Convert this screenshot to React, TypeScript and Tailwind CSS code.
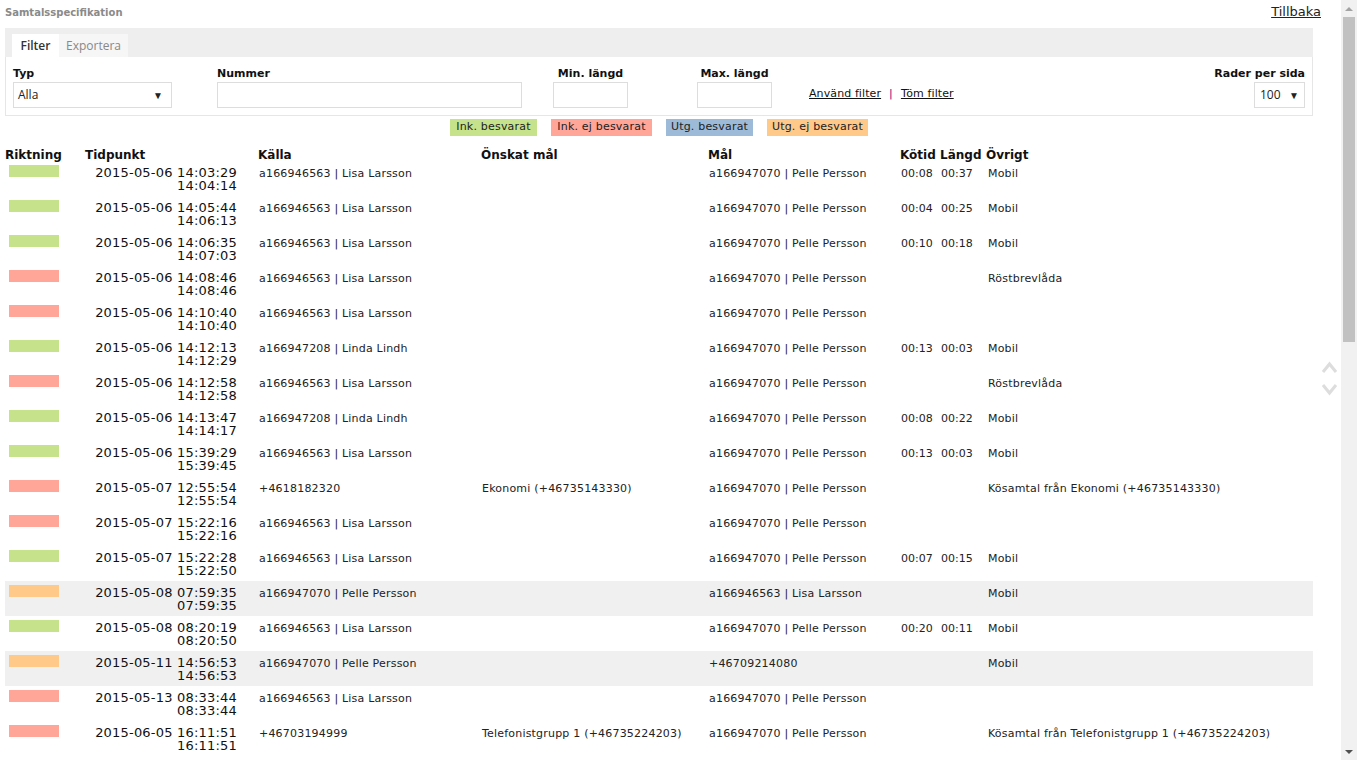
import React from "react";

type Dir = "in" | "miss" | "out" | "outMiss";

type Call = {
  dir: Dir;
  start: string;
  end: string;
  source: string;
  wanted?: string;
  target: string;
  queue?: string;
  length?: string;
  other?: string;
};

const LISA = "a166946563 | Lisa Larsson";
const PELLE = "a166947070 | Pelle Persson";
const LINDA = "a166947208 | Linda Lindh";

const calls: Call[] = [
  { dir: "in", start: "2015-05-06 14:03:29", end: "14:04:14", source: LISA, target: PELLE, queue: "00:08", length: "00:37", other: "Mobil" },
  { dir: "in", start: "2015-05-06 14:05:44", end: "14:06:13", source: LISA, target: PELLE, queue: "00:04", length: "00:25", other: "Mobil" },
  { dir: "in", start: "2015-05-06 14:06:35", end: "14:07:03", source: LISA, target: PELLE, queue: "00:10", length: "00:18", other: "Mobil" },
  { dir: "miss", start: "2015-05-06 14:08:46", end: "14:08:46", source: LISA, target: PELLE, other: "Röstbrevlåda" },
  { dir: "miss", start: "2015-05-06 14:10:40", end: "14:10:40", source: LISA, target: PELLE },
  { dir: "in", start: "2015-05-06 14:12:13", end: "14:12:29", source: LINDA, target: PELLE, queue: "00:13", length: "00:03", other: "Mobil" },
  { dir: "miss", start: "2015-05-06 14:12:58", end: "14:12:58", source: LISA, target: PELLE, other: "Röstbrevlåda" },
  { dir: "in", start: "2015-05-06 14:13:47", end: "14:14:17", source: LINDA, target: PELLE, queue: "00:08", length: "00:22", other: "Mobil" },
  { dir: "in", start: "2015-05-06 15:39:29", end: "15:39:45", source: LISA, target: PELLE, queue: "00:13", length: "00:03", other: "Mobil" },
  { dir: "miss", start: "2015-05-07 12:55:54", end: "12:55:54", source: "+4618182320", wanted: "Ekonomi (+46735143330)", target: PELLE, other: "Kösamtal från Ekonomi (+46735143330)" },
  { dir: "miss", start: "2015-05-07 15:22:16", end: "15:22:16", source: LISA, target: PELLE },
  { dir: "in", start: "2015-05-07 15:22:28", end: "15:22:50", source: LISA, target: PELLE, queue: "00:07", length: "00:15", other: "Mobil" },
  { dir: "outMiss", start: "2015-05-08 07:59:35", end: "07:59:35", source: PELLE, target: LISA, other: "Mobil" },
  { dir: "in", start: "2015-05-08 08:20:19", end: "08:20:50", source: LISA, target: PELLE, queue: "00:20", length: "00:11", other: "Mobil" },
  { dir: "outMiss", start: "2015-05-11 14:56:53", end: "14:56:53", source: PELLE, target: "+46709214080", other: "Mobil" },
  { dir: "miss", start: "2015-05-13 08:33:44", end: "08:33:44", source: LISA, target: PELLE },
  { dir: "miss", start: "2015-06-05 16:11:51", end: "16:11:51", source: "+46703194999", wanted: "Telefonistgrupp 1 (+46735224203)", target: PELLE, other: "Kösamtal från Telefonistgrupp 1 (+46735224203)" },
];

const barColor: Record<Dir, string> = {
  in: "bg-[#c6e28b]",
  miss: "bg-[#ffa699]",
  out: "bg-[#9dbbd9]",
  outMiss: "bg-[#ffc98a]",
};

const cols =
  "grid grid-cols-[80px_173px_223px_227px_192px_40px_46px_1fr]";

const font = "font-['DejaVu_Sans',Verdana,sans-serif]";

const Field: React.FC<{ className?: string; children?: React.ReactNode }> = ({ className, children }) => (
  <div
    className={`h-[26px] border border-[#dddddd] bg-white flex items-center font-['Open_Sans',sans-serif] text-[12px] text-[#222] ${className ?? ""}`}
  >
    {children}
  </div>
);

const Scrollbar: React.FC = () => (
  <div className="w-[16px] shrink-0 bg-[#f1f1f1] flex flex-col items-center">
    <div className="h-[17px] flex items-center justify-center">
      <div className="w-0 h-0 border-l-[4px] border-r-[4px] border-b-[4px] border-l-transparent border-r-transparent border-b-[#a3a3a3]" />
    </div>
    <div className="w-[12px] h-[325px] bg-[#c1c1c1]" />
    <div className="flex-1" />
    <div className="h-[17px] flex items-center justify-center">
      <div className="w-0 h-0 border-l-[4px] border-r-[4px] border-t-[4px] border-l-transparent border-r-transparent border-t-[#505050]" />
    </div>
  </div>
);

export default function App() {
  return (
    <div className={`flex h-[760px] w-full overflow-hidden bg-white ${font}`}>
      <div className="relative flex-1 min-w-0 pl-[5px]">
        {/* title */}
        <div className="flex items-start justify-between h-[28px] pr-[20px]">
          <span className="mt-[5px] text-[10px] font-bold text-[#8a8a8a]">Samtalsspecifikation</span>
          <a href="#" className="mt-[2px] text-[13px] text-[#222] underline">
            Tillbaka
          </a>
        </div>

        {/* filter panel */}
        <div className="w-[1308px]">
          <div className="h-[29px] bg-[#eeeeee] flex items-end pl-[7px] font-['Open_Sans',sans-serif] text-[12px]">
            <div className="h-[23px] w-[47px] bg-white flex items-center justify-center pt-[1px] font-semibold text-[#333]">
              Filter
            </div>
            <div className="h-[23px] w-[69px] bg-[#f6f6f6] flex items-center justify-center pt-[1px] text-[#888]">
              Exportera
            </div>
          </div>
          <div className="h-[59px] border-l border-r border-b border-[#e6e6e6] flex items-start pl-[7px] pr-[7px] pt-[9px] text-[11px] text-[#111]">
            <div className="w-[159px]">
              <div className="font-bold leading-[16px]">Typ</div>
              <Field className="justify-between pl-[4px] pr-[8px]">
                <span>Alla</span>
                <span className="text-[10px]">▼</span>
              </Field>
            </div>
            <div className="w-[305px] ml-[45px]">
              <div className="font-bold leading-[16px]">Nummer</div>
              <Field />
            </div>
            <div className="w-[75px] ml-[31px] text-center">
              <div className="font-bold leading-[16px]">Min. längd</div>
              <Field />
            </div>
            <div className="w-[75px] ml-[69px] text-center">
              <div className="font-bold leading-[16px]">Max. längd</div>
              <Field />
            </div>
            <div className="ml-[37px] mt-[20px] flex items-center gap-[8px] tracking-[0.1px]">
              <a href="#" className="underline text-[#111]">Använd filter</a>
              <span className="text-[#800080]">|</span>
              <a href="#" className="underline text-[#111]">Töm filter</a>
            </div>
            <div className="ml-auto flex flex-col items-end">
              <div className="font-bold leading-[16px]">Rader per sida</div>
              <Field className="w-[51px] justify-between pl-[5px] pr-[5px]">
                <span>100</span>
                <span className="text-[10px]">▼</span>
              </Field>
            </div>
          </div>
        </div>

        {/* legend */}
        <div className="w-[1308px] flex justify-center gap-[14px] mt-[3px] text-[11px] text-[#222] tracking-[0.2px]">
          <span className="h-[17px] w-[87px] flex items-center justify-center bg-[#c6e28b]">Ink. besvarat</span>
          <span className="h-[17px] w-[101px] flex items-center justify-center bg-[#ffa699]">Ink. ej besvarat</span>
          <span className="h-[17px] w-[87px] flex items-center justify-center bg-[#9dbbd9]">Utg. besvarat</span>
          <span className="h-[17px] w-[101px] flex items-center justify-center bg-[#ffc98a]">Utg. ej besvarat</span>
        </div>

        {/* table */}
        <div className="w-[1308px] mt-[7px]">
          <div className={`${cols} h-[18px] items-center pt-[3px] text-[12px] font-bold text-[#111]`}>
            <div>Riktning</div>
            <div>Tidpunkt</div>
            <div>Källa</div>
            <div>Önskat mål</div>
            <div>Mål</div>
            <div>Kötid</div>
            <div>Längd</div>
            <div>Övrigt</div>
          </div>
          {calls.map((c, i) => (
            <div
              key={i}
              className={`${cols} h-[35px] text-[11px] tracking-[0.2px] text-[#222] ${
                c.dir === "outMiss" || c.dir === "out" ? "bg-[#f0f0f0]" : ""
              }`}
            >
              <div className="pl-[4px] pt-[4px]">
                <div className={`w-[50px] h-[12px] ${barColor[c.dir]}`} />
              </div>
              <div className="pr-[21px] pt-[5px] text-right text-[13px] leading-[13px] text-[#111]">
                <div>{c.start}</div>
                <div>{c.end}</div>
              </div>
              <div className="pl-[1px] pt-[6px] leading-[13px] whitespace-nowrap">{c.source}</div>
              <div className="pl-[1px] pt-[6px] leading-[13px] whitespace-nowrap">{c.wanted ?? ""}</div>
              <div className="pl-[1px] pt-[6px] leading-[13px] whitespace-nowrap">{c.target}</div>
              <div className="pl-[1px] pt-[6px] leading-[13px] tracking-normal">{c.queue ?? ""}</div>
              <div className="pl-[1px] pt-[6px] leading-[13px] tracking-normal">{c.length ?? ""}</div>
              <div className="pl-[2px] pt-[6px] leading-[13px] whitespace-nowrap">{c.other ?? ""}</div>
            </div>
          ))}
        </div>

        {/* scroll helpers */}
        <div className="absolute right-[3px] top-[360px] flex flex-col items-center gap-[9px]">
          <svg width="17" height="14" viewBox="0 0 17 14" fill="none" stroke="#dddddd" strokeWidth="3">
            <path d="M2 12 L8.5 4 L15 12" />
          </svg>
          <svg width="17" height="14" viewBox="0 0 17 14" fill="none" stroke="#dddddd" strokeWidth="3">
            <path d="M2 2 L8.5 10 L15 2" />
          </svg>
        </div>
      </div>
      <Scrollbar />
    </div>
  );
}
